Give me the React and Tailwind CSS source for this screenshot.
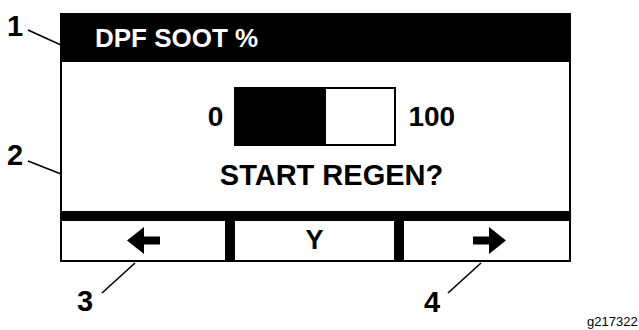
import React from 'react';

const ArrowLeft = () => (
  <svg width="33" height="27" viewBox="0 0 33 27">
    <polygon points="0,13.5 17,0 17,27" fill="black" />
    <rect x="16" y="9.5" width="17" height="8" fill="black" />
  </svg>
);

const ArrowRight = () => (
  <svg width="33" height="27" viewBox="0 0 33 27">
    <polygon points="33,13.5 16,0 16,27" fill="black" />
    <rect x="0" y="9.5" width="17" height="8" fill="black" />
  </svg>
);

const Callout = ({ className, children }) => (
  <span className={`absolute text-[29px] font-bold leading-none text-black ${className}`}>{children}</span>
);

export default function App() {
  return (
    <div className="relative w-[639px] h-[330px] bg-white overflow-hidden pt-[13px] font-['Liberation_Sans',Arial,sans-serif]">
      {/* Display panel */}
      <div className="ml-[60px] w-[511px] h-[249px] border-x-2 border-b-2 border-black flex flex-col">
        <div className="h-[49px] bg-black flex items-center pl-[33px] text-white font-bold text-[26px] leading-none">
          DPF SOOT %
        </div>

        <div className="h-[149px] flex flex-col items-center pl-[32px] pt-[25px] font-bold text-black">
          <div className="flex items-center">
            <span className="text-[28px] leading-none mr-[11px]">0</span>
            <div className="w-[162px] h-[59px] border-2 border-black flex">
              <div className="w-[90px] h-full bg-black" />
            </div>
            <span className="text-[28px] leading-none ml-[12px]">100</span>
          </div>
          <div className="mt-[15px] text-[29px] leading-none">START REGEN?</div>
        </div>

        <div className="h-[10px] bg-black" />

        <div className="flex-1 grid grid-cols-[163px_159px_1fr] gap-[10px] bg-black">
          <div className="bg-white flex items-center justify-center">
            <ArrowLeft />
          </div>
          <div className="bg-white flex items-center justify-center text-[27px] font-bold leading-none">
            Y
          </div>
          <div className="bg-white flex items-center justify-center pl-[6px]">
            <ArrowRight />
          </div>
        </div>
      </div>

      {/* Leader lines */}
      <svg className="absolute inset-0 pointer-events-none" width="639" height="330" viewBox="0 0 639 330">
        <g stroke="black" strokeWidth="1.6" fill="none">
          <line x1="28" y1="30" x2="61" y2="45" />
          <line x1="28" y1="161" x2="61" y2="174" />
          <line x1="102" y1="293" x2="135" y2="263" />
          <line x1="448" y1="293" x2="481" y2="263" />
        </g>
      </svg>

      <Callout className="left-[7px] top-[12px]">1</Callout>
      <Callout className="left-[7px] top-[141px]">2</Callout>
      <Callout className="left-[77px] top-[287px]">3</Callout>
      <Callout className="left-[424px] top-[288px]">4</Callout>

      <span className="absolute left-[587px] top-[315px] text-[13px] leading-none text-black">g217322</span>
    </div>
  );
}
